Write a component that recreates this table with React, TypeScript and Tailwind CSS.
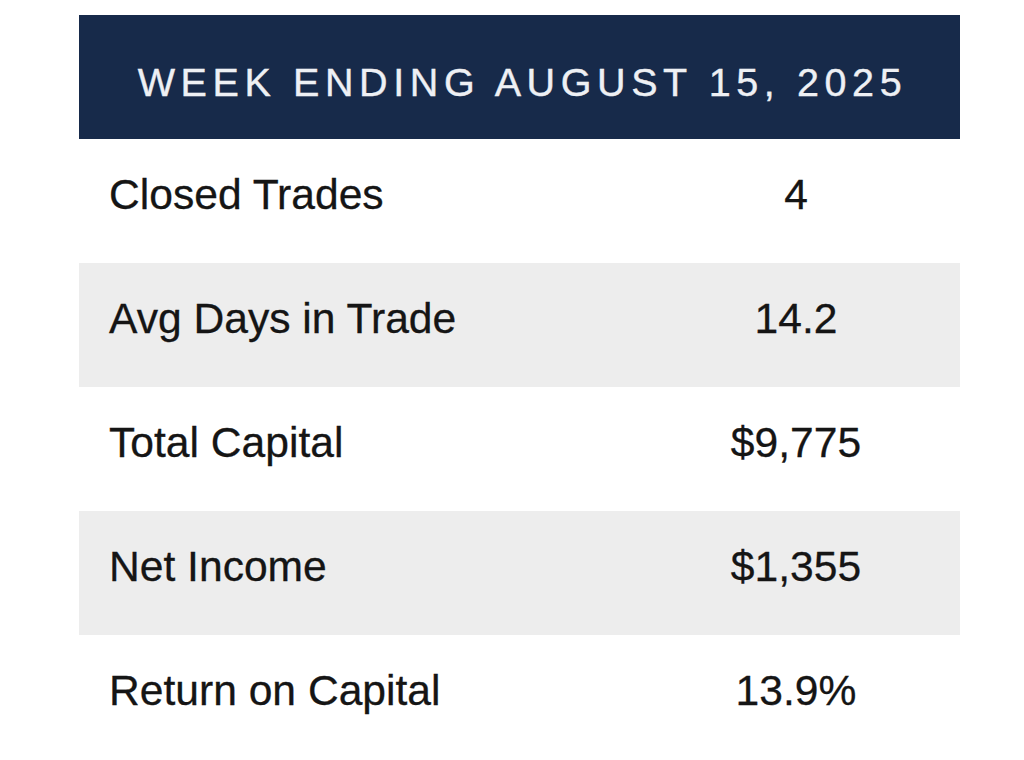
const rows = [
  { label: 'Closed Trades', value: '4' },
  { label: 'Avg Days in Trade', value: '14.2' },
  { label: 'Total Capital', value: '$9,775' },
  { label: 'Net Income', value: '$1,355' },
  { label: 'Return on Capital', value: '13.9%' },
]

export default function App() {
  return (
    <div
      className="min-h-[760px] bg-white pt-[15px] pl-[79px]"
      style={{ fontFamily: '"Liberation Sans", Arial, sans-serif' }}
    >
      <div className="w-[881px]">
        <div className="h-[124px] bg-[#172a4a] flex items-center justify-center pt-[11px] pl-[6px]">
          <h1 className="text-[39.5px] leading-none tracking-[5.6px] text-[#eef0f4] [-webkit-text-stroke:0.4px_#eef0f4]">
            WEEK ENDING AUGUST 15, 2025
          </h1>
        </div>

        {rows.map((row, i) => (
          <div
            key={row.label}
            className={`h-[124px] flex items-center pb-[14px] ${i % 2 === 1 ? 'bg-[#ededed]' : 'bg-white'}`}
          >
            <div className="flex-1 pl-[30px] text-[42.6px] leading-none text-[#151515] [-webkit-text-stroke:0.3px_#151515]">
              {row.label}
            </div>
            <div className="w-[328px] text-center text-[42.6px] leading-none text-[#151515] [-webkit-text-stroke:0.3px_#151515]">
              {row.value}
            </div>
          </div>
        ))}
      </div>
    </div>
  )
}
